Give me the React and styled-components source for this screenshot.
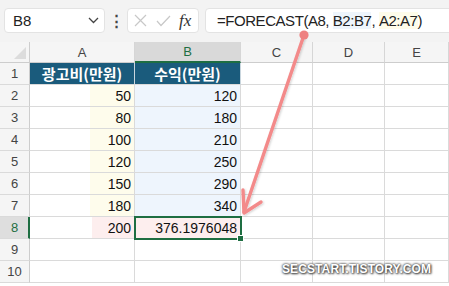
import styled, { createGlobalStyle } from "styled-components";

const GlobalStyle = createGlobalStyle`
  body {
    margin: 0;
    background: #fff;
  }
`;

const rows = [
  { a: "50", b: "120" },
  { a: "80", b: "180" },
  { a: "100", b: "210" },
  { a: "120", b: "250" },
  { a: "150", b: "290" },
  { a: "180", b: "340" },
];

const App = () => {
  return (
    <Page>
      <GlobalStyle />
      <Toolbar>
        <NameBox>
          <span>B8</span>
          <svg width="11" height="7" viewBox="0 0 11 7">
            <path d="M1 1 L5.5 5.5 L10 1" fill="none" stroke="#444" strokeWidth="1.3" />
          </svg>
        </NameBox>
        <Dots>⋮</Dots>
        <FxBox>
          <svg width="13" height="13" viewBox="0 0 13 13">
            <path d="M1 1 L12 12 M12 1 L1 12" stroke="#c8c8c8" strokeWidth="1.2" />
          </svg>
          <svg width="15" height="12" viewBox="0 0 15 12">
            <path d="M1 6 L5 10.5 L14 1" fill="none" stroke="#c8c8c8" strokeWidth="1.2" />
          </svg>
          <Fx>fx</Fx>
        </FxBox>
        <FormulaBox>
          =FORECAST(A8, <Ref $bg="#eef5fc">B2:B7</Ref>, <Ref $bg="#fefcea">A2:A7</Ref>)
        </FormulaBox>
      </Toolbar>

      <Grid>
        <Corner>
          <svg width="12" height="12" viewBox="0 0 12 12">
            <path d="M12 0 L12 12 L0 12 Z" fill="#dcdcdc" />
          </svg>
        </Corner>
        <ColHead>A</ColHead>
        <ColHead $active>B</ColHead>
        <ColHead>C</ColHead>
        <ColHead>D</ColHead>
        <ColHead>E</ColHead>

        <RowHead>1</RowHead>
        <TitleCell>광고비(만원)</TitleCell>
        <TitleCell>수익(만원)</TitleCell>
        <Cell />
        <Cell />
        <Cell />

        {rows.map((r, i) => (
          <Row key={i}>
            <RowHead>{i + 2}</RowHead>
            <Cell $tint="#fefcec" $from={60}>{r.a}</Cell>
            <Cell $fill="#eef5fd">{r.b}</Cell>
            <Cell />
            <Cell />
            <Cell />
          </Row>
        ))}

        <RowHead $active>8</RowHead>
        <Cell $tint="#fdeeee" $from={62}>200</Cell>
        <Cell $fill="#fdeeee" $selected>376.1976048</Cell>
        <Cell />
        <Cell />
        <Cell />

        {[9, 10].map((n) => (
          <Row key={n}>
            <RowHead>{n}</RowHead>
            <Cell />
            <Cell />
            <Cell />
            <Cell />
            <Cell />
          </Row>
        ))}
      </Grid>

      <ArrowLayer width="449" height="286" viewBox="0 0 449 286">
        <defs>
          <filter id="sh" x="-20%" y="-20%" width="140%" height="140%">
            <feDropShadow dx="1" dy="1" stdDeviation="1.2" floodColor="#000" floodOpacity="0.18" />
          </filter>
        </defs>
        <g filter="url(#sh)" stroke="#f38a8a" strokeWidth="3.4" strokeLinecap="round" fill="none">
          <line x1="304" y1="35" x2="244" y2="212" />
          <path d="M243 190 L244 213 L261 202" strokeLinejoin="round" />
        </g>
        <circle cx="304" cy="35" r="4.6" fill="#ee8080" />
      </ArrowLayer>

      <Watermark>SECSTART.TISTORY.COM</Watermark>
    </Page>
  );
};

export default App;

const Page = styled.div`
  position: relative;
  width: 449px;
  height: 286px;
  overflow: hidden;
  background: #fff;
  font-family: "Liberation Sans", Arial, sans-serif;
`;

const Toolbar = styled.div`
  display: flex;
  align-items: center;
  height: 42px;
  padding: 0 0 1px 4px;
  box-sizing: border-box;
  background: #f3f3f3;
`;

const Box = styled.div`
  display: flex;
  align-items: center;
  height: 25px;
  box-sizing: border-box;
  background: #fff;
  border: 1px solid #e3e3e3;
  border-radius: 4px;
`;

const NameBox = styled(Box)`
  width: 101px;
  justify-content: space-between;
  padding: 0 5px 0 8px;
  font-size: 15px;
  color: #222;
`;

const Dots = styled.div`
  width: 22px;
  text-align: center;
  font-size: 15px;
  font-weight: bold;
  color: #444;
`;

const FxBox = styled(Box)`
  width: 72px;
  gap: 9px;
  padding-left: 6px;
`;

const Fx = styled.span`
  font-family: "Liberation Serif", serif;
  font-style: italic;
  font-size: 17px;
  color: #333;
  margin-left: -1px;
`;

const FormulaBox = styled(Box)`
  flex: 1;
  margin: 0 -10px 0 6px;
  padding-left: 11px;
  font-size: 15px;
  letter-spacing: -0.45px;
  color: #222;
  white-space: pre;
`;

const Ref = styled.span`
  background: ${(p) => p.$bg};
`;

const Grid = styled.div`
  display: grid;
  grid-template-columns: 30px 105px 106px 72px 72px 1fr;
  grid-template-rows: 21px repeat(10, 22px);
`;

const Row = styled.div`
  display: contents;
`;

const HeadBase = styled.div`
  display: flex;
  align-items: center;
  justify-content: center;
  box-sizing: border-box;
  font-size: 13px;
  color: #444;
  background: #f5f5f5;
`;

const Corner = styled(HeadBase)`
  justify-content: flex-end;
  align-items: flex-end;
  padding: 0 3px 3px 0;
  border-right: 1px solid #cdcdcd;
  border-bottom: 1px solid #cdcdcd;
`;

const ColHead = styled(HeadBase)`
  border-right: 1px solid #d6d6d6;
  border-bottom: ${(p) => (p.$active ? "2px solid #1e6e42" : "1px solid #cdcdcd")};
  background: ${(p) => (p.$active ? "#d9d9d9" : "#f5f5f5")};
  color: ${(p) => (p.$active ? "#1e6e42" : "#444")};
`;

const RowHead = styled(HeadBase)`
  border-right: ${(p) => (p.$active ? "2px solid #1e6e42" : "1px solid #cdcdcd")};
  border-bottom: 1px solid #dadada;
  background: ${(p) => (p.$active ? "#dedede" : "#f5f5f5")};
  color: ${(p) => (p.$active ? "#1e6e42" : "#444")};
  padding-left: ${(p) => (p.$active ? "1px" : "0")};
`;

const Cell = styled.div`
  position: relative;
  display: flex;
  align-items: center;
  justify-content: flex-end;
  padding-right: 3px;
  box-sizing: border-box;
  font-size: 14px;
  color: #111;
  border-right: 1px solid #dadada;
  border-bottom: 1px solid #dadada;
  background: ${(p) =>
    p.$tint
      ? `linear-gradient(to right, #fff ${p.$from}px, ${p.$tint} ${p.$from}px)`
      : p.$fill || "#fff"};
  ${(p) =>
    p.$selected &&
    `
    outline: 2px solid #1e6e42;
    outline-offset: -1px;
    z-index: 1;
    &::after {
      content: "";
      position: absolute;
      right: -4px;
      bottom: -4px;
      width: 5px;
      height: 5px;
      background: #1e6e42;
      border: 1px solid #fff;
    }
  `}
`;

const TitleCell = styled(Cell)`
  justify-content: center;
  padding: 0;
  background: #1a5b7c;
  color: #fff;
  font-family: "Noto Sans CJK KR", sans-serif;
  font-weight: bold;
  font-size: 15px;
  border-right: 1px solid #c9d6de;
`;

const ArrowLayer = styled.svg`
  position: absolute;
  left: 0;
  top: 0;
  pointer-events: none;
`;

const Watermark = styled.div`
  position: absolute;
  left: 282px;
  top: 262px;
  font-size: 12px;
  font-weight: bold;
  letter-spacing: 0.1px;
  color: #fff;
  text-shadow: 0 0 2px #333, 1px 1px 2px #555, 0 0 3px #666;
`;
